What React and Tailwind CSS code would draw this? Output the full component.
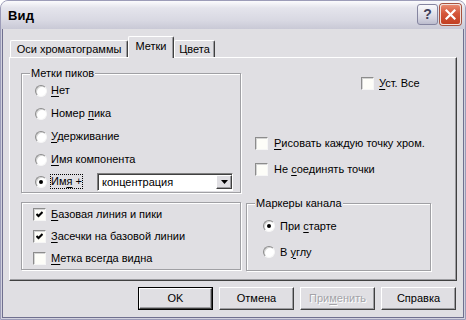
import React from 'react';

const U = ({ children }) => (
  <span className="underline underline-offset-[2px] decoration-[1px]">{children}</span>
);

function Radio({ checked }) {
  return (
    <span className="flex items-center justify-center w-[12px] h-[12px] shrink-0 rounded-full bg-white border border-t-[#8c8c8c] border-l-[#8c8c8c] border-r-[#f6f6f6] border-b-[#f6f6f6] shadow-[inset_1px_1px_0_#d4d4d4]">
      {checked && <span className="w-[4px] h-[4px] rounded-full bg-black" />}
    </span>
  );
}

function Check({ checked }) {
  return (
    <span className="flex items-center justify-center w-[13px] h-[13px] shrink-0 bg-[#fdfdf8] border border-t-[#8c8c8c] border-l-[#8c8c8c] border-r-[#f6f6f6] border-b-[#f6f6f6] shadow-[inset_1px_1px_0_#d4d4d4]">
      {checked && (
        <svg width="7" height="7" viewBox="0 0 7 7">
          <polyline points="0.5,3 2.5,5 6.5,1" fill="none" stroke="#000" strokeWidth="2" />
        </svg>
      )}
    </span>
  );
}

function Btn({ children, def, disabled }) {
  const face = (
    <span className="flex items-center justify-center w-full h-full bg-[#e0dfe3] border border-t-white border-l-white border-r-[#404040] border-b-[#404040] shadow-[inset_-1px_-1px_0_#9d9da1]">
      {disabled ? (
        <span className="text-[#a3a3a8] [text-shadow:1px_1px_0_#ffffff]">{children}</span>
      ) : (
        children
      )}
    </span>
  );
  return (
    <div className={def ? 'w-[75px] h-[23px] border border-black' : 'w-[75px] h-[23px]'}>{face}</div>
  );
}

function Tab({ children, w, selected }) {
  if (selected) {
    return (
      <div
        className={`${w} h-[22px] -mb-[1px] relative z-10 flex items-center justify-center pb-[3px] bg-[#e0dfe3] border-t border-l border-white border-r border-r-[#404040] shadow-[inset_-1px_0_0_#9d9da1] rounded-t-[2px]`}
      >
        {children}
      </div>
    );
  }
  return (
    <div
      className={`${w} h-[17px] flex items-center justify-center bg-[#e0dfe3] border-t border-l border-white border-r border-r-[#404040] shadow-[inset_-1px_0_0_#9d9da1] rounded-t-[2px]`}
    >
      {children}
    </div>
  );
}

const etched = 'border border-[#a0a0a4] shadow-[inset_1px_1px_0_#ffffff,1px_1px_0_#ffffff]';

export default function App() {
  return (
    <div className="w-[466px] h-[320px] flex flex-col rounded-t-[8px] overflow-hidden border border-[#9c9cb8] bg-[#d2d2de] text-[11px] leading-[13px] text-black font-['Liberation_Sans','Arial',sans-serif]">
      {/* title bar */}
      <div className="h-[28px] shrink-0 flex items-center justify-between pl-[7px] pr-[4px] bg-[linear-gradient(to_bottom,#fbfbfd_0%,#e4e4ec_25%,#d8d8e2_70%,#c9c9d6_100%)]">
        <span className="text-[13px] font-bold tracking-[0.2px]">Вид</span>
        <div className="flex gap-[2px] pb-[1px]">
          <div className="w-[21px] h-[21px] rounded-[3px] border border-[#8585a0] bg-[linear-gradient(to_bottom,#fafafc,#d4d4e0_70%,#bcbcce)] flex items-center justify-center text-[14px] font-bold text-[#41415a]">
            ?
          </div>
          <div className="w-[21px] h-[21px] rounded-[3px] border border-[#f0e0dc] bg-[linear-gradient(to_bottom,#e88a70,#d4563a_45%,#c23f22)] shadow-[0_0_0_1px_#a8533f] flex items-center justify-center">
            <svg width="11" height="11" viewBox="0 0 11 11">
              <path d="M1.5 1.5 L9.5 9.5 M9.5 1.5 L1.5 9.5" stroke="#fff" strokeWidth="2.2" strokeLinecap="square" />
            </svg>
          </div>
        </div>
      </div>

      {/* client area */}
      <div className="flex-1 flex flex-col mx-[1px] mb-[1px] border border-t-0 border-[#70708f] bg-[#e0dfe3] px-[6px] pt-[7px]">
        <div className="flex items-end h-[21px] pl-[1px]">
          <Tab w="w-[118px]">Оси хроматограммы</Tab>
          <Tab w="w-[46px]" selected>
            Метки
          </Tab>
          <Tab w="w-[41px]">Цвета</Tab>
        </div>

        <div className="h-[224px] flex pl-[11px] pt-[9px] border border-t-white border-l-white border-r-[#404040] border-b-[#404040] shadow-[inset_-1px_-1px_0_#9d9da1]">
          {/* left column */}
          <div className="w-[220px] flex flex-col">
            <fieldset className={`${etched} pl-[13px]`}>
              <legend className="ml-[-5px] px-[1px] leading-[12px] bg-[#e0dfe3]">Метки пиков</legend>
              <div className="flex items-center h-[23px] gap-[4px]">
                <Radio />
                <span><U>Н</U>ет</span>
              </div>
              <div className="flex items-center h-[23px] gap-[4px]">
                <Radio />
                <span>Номер <U>п</U>ика</span>
              </div>
              <div className="flex items-center h-[23px] gap-[4px]">
                <Radio />
                <span><U>У</U>держивание</span>
              </div>
              <div className="flex items-center h-[23px] gap-[4px]">
                <Radio />
                <span><U>И</U>мя компонента</span>
              </div>
              <div className="flex items-center h-[21px]">
                <Radio checked />
                <span className="ml-[3px] w-[33px] border border-dotted border-black leading-[13px] pl-[0px]">
                  Им<U>я</U> +
                </span>
                <div className="ml-[14px] flex w-[136px] h-[18px] bg-white border border-t-[#808080] border-l-[#808080] border-r-white border-b-white shadow-[inset_1px_1px_0_#404040] pt-[1px] pl-[1px]">
                  <span className="flex-1 pl-[3px] leading-[15px]">концентрация</span>
                  <span className="w-[16px] h-[14px] flex items-center justify-center bg-[#e0dfe3] border border-t-white border-l-white border-r-[#404040] border-b-[#404040] shadow-[inset_-1px_-1px_0_#9d9da1]">
                    <svg width="7" height="4" viewBox="0 0 7 4">
                      <path d="M0 0 H7 L3.5 4 Z" fill="#000" />
                    </svg>
                  </span>
                </div>
              </div>
            </fieldset>

            <div className={`${etched} mt-[9px] h-[68px] pl-[11px] flex flex-col`}>
              <div className="flex items-center h-[22px] gap-[5px]">
                <Check checked />
                <span><U>Б</U>азовая линия и пики</span>
              </div>
              <div className="flex items-center h-[22px] gap-[5px]">
                <Check checked />
                <span><U>З</U>асечки на базовой линии</span>
              </div>
              <div className="flex items-center h-[22px] gap-[5px]">
                <Check />
                <span><U>М</U>етка всегда видна</span>
              </div>
            </div>
          </div>

          {/* right column */}
          <div className="ml-[5px] w-[185px] flex flex-col">
            <div className="mt-[9px] h-[14px] flex items-center gap-[5px] pl-[115px]">
              <Check />
              <span><U>У</U>ст. Все</span>
            </div>
            <div className="mt-[46px] h-[14px] flex items-center gap-[6px] pl-[9px]">
              <Check />
              <span><U>Р</U>исовать каждую точку хром.</span>
            </div>
            <div className="mt-[12px] h-[14px] flex items-center gap-[6px] pl-[9px]">
              <Check />
              <span>Не <U>с</U>оединять точки</span>
            </div>
            <fieldset className={`${etched} mt-[21px] pl-[16px] pt-[4px] pb-[5px]`}>
              <legend className="ml-[-8px] px-[1px] leading-[12px] bg-[#e0dfe3]">Маркеры канала</legend>
              <div className="flex items-center h-[26px] gap-[5px]">
                <Radio checked />
                <span>При <U>с</U>тарте</span>
              </div>
              <div className="flex items-center h-[26px] gap-[5px]">
                <Radio />
                <span>В <U>у</U>глу</span>
              </div>
            </fieldset>
          </div>
        </div>

        <div className="mt-[6px] flex justify-end gap-[6px] mr-[1px]">
          <Btn def>OK</Btn>
          <Btn>Отмена</Btn>
          <Btn disabled>
            При<U>м</U>енить
          </Btn>
          <Btn>Справка</Btn>
        </div>
      </div>
    </div>
  );
}
